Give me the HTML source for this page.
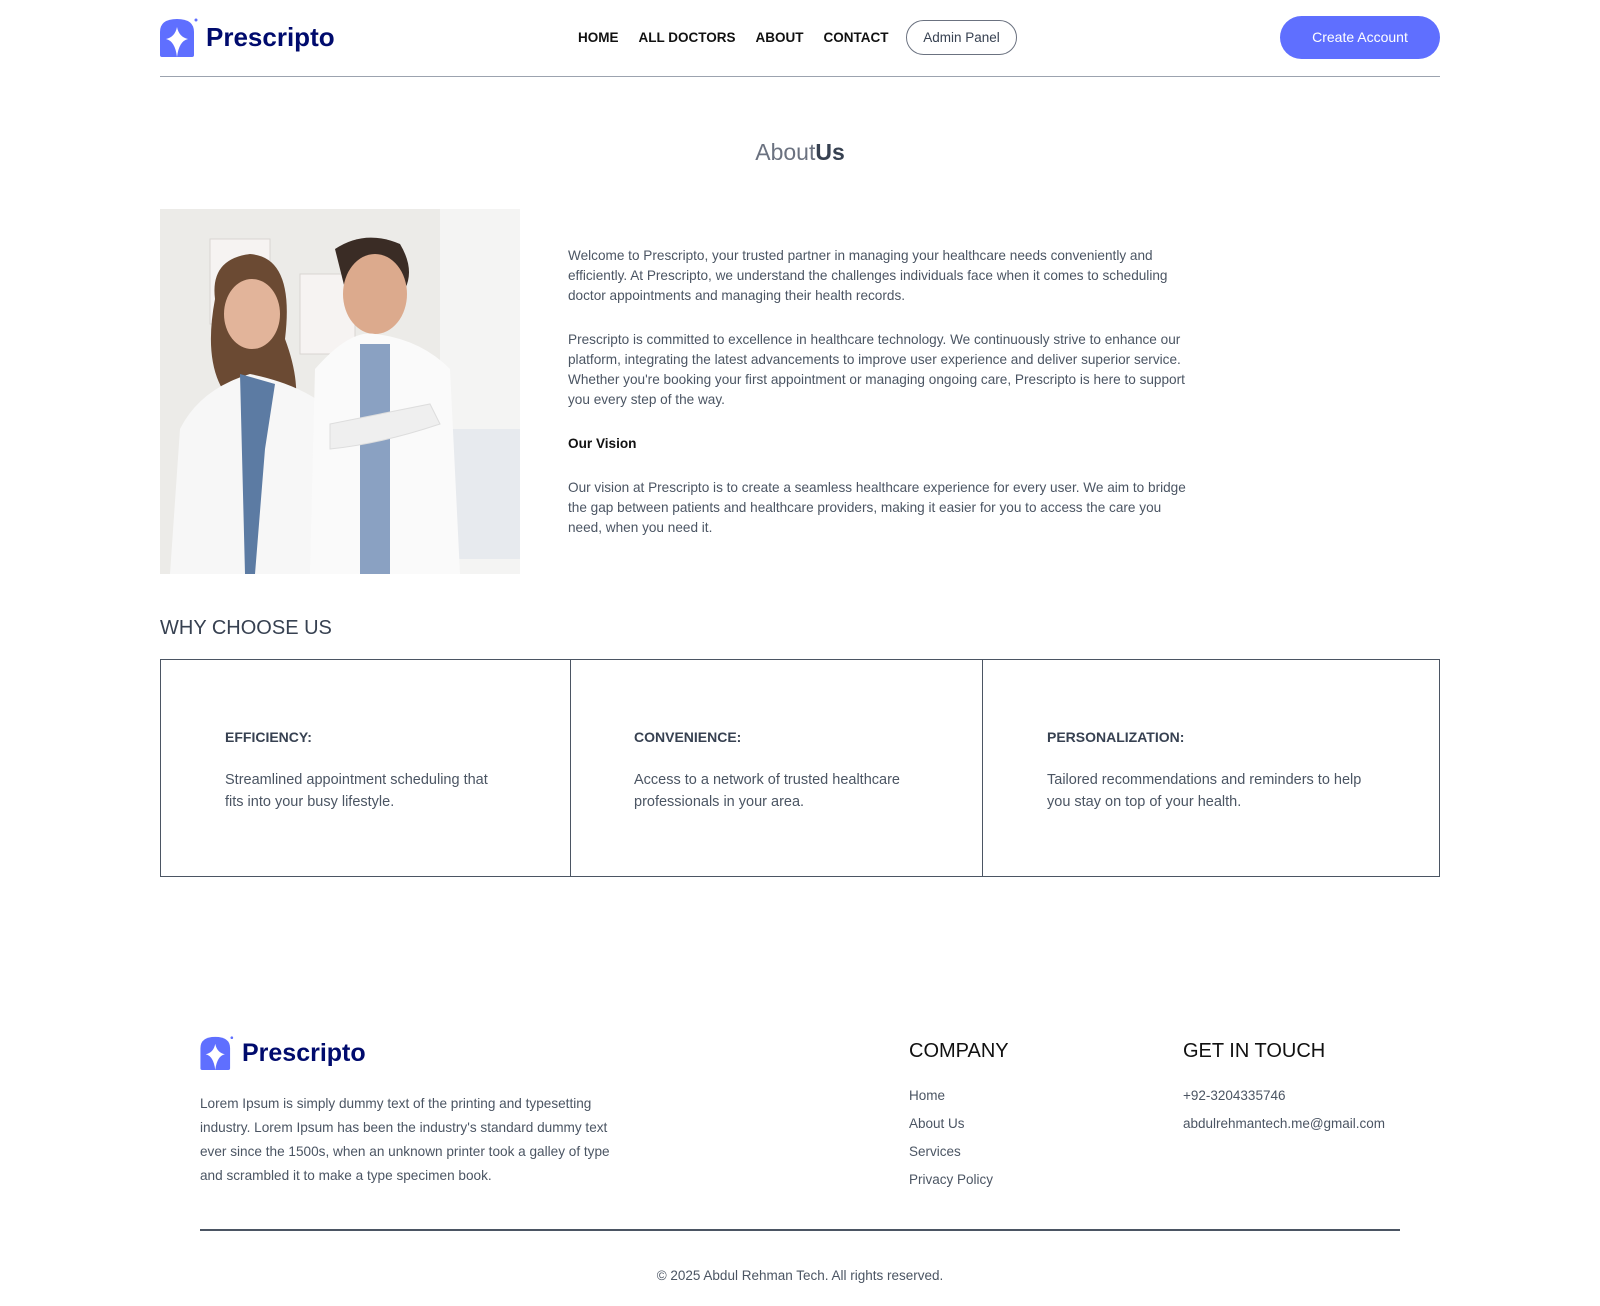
<!DOCTYPE html>
<html><head><meta charset="utf-8"><style>
*{margin:0;padding:0;box-sizing:border-box}
body{width:1600px;height:1306px;background:#fff;font-family:"Liberation Sans",sans-serif;position:relative;overflow:hidden;color:#4b5563}
.a{position:absolute;white-space:nowrap}
.logo{display:flex;align-items:center;gap:8px;color:#000b6d;font-weight:bold}
.nav a{color:#111;font-size:13.5px;font-weight:bold;margin-right:20px;text-decoration:none}
p.t{font-size:13.6px;line-height:20px;color:#4b5563}
.box{position:absolute;top:659px;height:218px;border:1.5px solid #4b5563}
.box h4{position:absolute;left:64px;top:69px;font-size:14px;color:#374151}
.box div{position:absolute;left:64px;top:109px;font-size:14.5px;line-height:22px;color:#4b5563}
.fl{font-size:13.5px;color:#4b5563}
</style></head><body>
<div class="a logo" style="left:160px;top:18px;font-size:26px">
<svg width="38" height="39" viewBox="0 0 38 39"><path d="M0 14 Q0 1 17 1 Q34 1 34 14 V37 Q34 39 32 39 H2 Q0 39 0 37Z" fill="#5f6fff"/><path d="M17 9 Q19 19 28 21 Q19 23 17 39 Q15 23 6 21 Q15 19 17 9Z" fill="#fff"/><circle cx="36" cy="2" r="1.5" fill="#5f6fff"/></svg>
<span>Prescripto</span></div>
<div class="a nav" style="left:578px;top:30px;display:flex;align-items:center">
<a>HOME</a><a>ALL DOCTORS</a><a>ABOUT</a><a>CONTACT</a></div>
<div class="a" style="left:906px;top:20px;width:111px;height:35px;border:1px solid #6b7280;border-radius:18px;font-size:13.5px;color:#374151;text-align:center;line-height:33px">Admin Panel</div>
<div class="a" style="left:1280px;top:16px;width:160px;height:43px;background:#5f6fff;border-radius:22px;color:#fff;font-size:14px;text-align:center;line-height:43px">Create Account</div>
<div class="a" style="left:160px;top:76px;width:1280px;height:1px;background:#9ca3af"></div>
<div class="a" style="left:0;width:1600px;text-align:center;top:139px;font-size:23px;color:#6b7280">About<b style="color:#374151">Us</b></div>
<svg class="a" style="left:160px;top:209px" width="360" height="365" viewBox="0 0 360 365">
<rect width="360" height="365" fill="#ecebe8"/><rect x="280" y="0" width="80" height="365" fill="#f4f4f3"/><rect x="50" y="30" width="60" height="85" fill="#f6f3f2" stroke="#d9d6d2"/><rect x="140" y="65" width="55" height="80" fill="#f6f3f2" stroke="#d9d6d2"/>
<rect x="250" y="220" width="110" height="130" fill="#e7eaee"/>
<path d="M55 90 Q50 50 90 45 Q135 48 125 130 Q140 170 135 200 L80 200 Q40 170 55 90Z" fill="#6b4a33"/>
<ellipse cx="92" cy="105" rx="28" ry="35" fill="#e2b49a"/>
<path d="M10 365 L20 220 Q40 180 90 165 Q140 175 170 200 L180 365Z" fill="#f7f7f7"/>
<path d="M80 165 L115 175 L105 240 L95 365 L85 365Z" fill="#5c7ba3"/>
<path d="M175 40 Q205 20 240 35 Q255 60 245 80 L185 80Z" fill="#3a2c25"/>
<ellipse cx="215" cy="85" rx="32" ry="40" fill="#dcaa8d"/>
<path d="M150 365 L155 160 Q190 120 215 125 Q260 130 290 160 L300 365Z" fill="#fafafa"/>
<path d="M200 135 L230 135 L230 365 L200 365Z" fill="#8aa1c2"/>
<path d="M170 215 Q220 205 270 195 L280 215 Q220 235 170 240Z" fill="#efefef" stroke="#ddd"/>
</svg>
<div class="a" style="left:568px;top:246px">
<p class="t">Welcome to Prescripto, your trusted partner in managing your healthcare needs conveniently and<br>efficiently. At Prescripto, we understand the challenges individuals face when it comes to scheduling<br>doctor appointments and managing their health records.</p>
<p class="t" style="margin-top:24px">Prescripto is committed to excellence in healthcare technology. We continuously strive to enhance our<br>platform, integrating the latest advancements to improve user experience and deliver superior service.<br>Whether you're booking your first appointment or managing ongoing care, Prescripto is here to support<br>you every step of the way.</p>
<p class="t" style="margin-top:24px;color:#111;font-weight:bold">Our Vision</p>
<p class="t" style="margin-top:24px">Our vision at Prescripto is to create a seamless healthcare experience for every user. We aim to bridge<br>the gap between patients and healthcare providers, making it easier for you to access the care you<br>need, when you need it.</p>
</div>
<div class="a" style="left:160px;top:617px;font-size:20px;color:#374151;font-weight:500">WHY CHOOSE US</div>
<div class="box" style="left:160px;width:411px"><h4>EFFICIENCY:</h4><div>Streamlined appointment scheduling that<br>fits into your busy lifestyle.</div></div>
<div class="box" style="left:570px;width:413px;border-left:none"><h4>CONVENIENCE:</h4><div>Access to a network of trusted healthcare<br>professionals in your area.</div></div>
<div class="box" style="left:982px;width:458px"><h4>PERSONALIZATION:</h4><div>Tailored recommendations and reminders to help<br>you stay on top of your health.</div></div>
<div class="a logo" style="left:200px;top:1036px;font-size:25px">
<svg width="34" height="34" viewBox="0 0 38 39"><path d="M0 14 Q0 1 17 1 Q34 1 34 14 V37 Q34 39 32 39 H2 Q0 39 0 37Z" fill="#5f6fff"/><path d="M17 9 Q19 19 28 21 Q19 23 17 39 Q15 23 6 21 Q15 19 17 9Z" fill="#fff"/><circle cx="36" cy="2" r="1.5" fill="#5f6fff"/></svg>
<span>Prescripto</span></div>
<div class="a fl" style="left:200px;top:1092px;line-height:24px;font-size:13.6px">Lorem Ipsum is simply dummy text of the printing and typesetting<br>industry. Lorem Ipsum has been the industry's standard dummy text<br>ever since the 1500s, when an unknown printer took a galley of type<br>and scrambled it to make a type specimen book.</div>
<div class="a" style="left:909px;top:1040px;font-size:20px;color:#111;font-weight:500">COMPANY</div>
<div class="a fl" style="left:909px;top:1082px;line-height:28px">Home<br>About Us<br>Services<br>Privacy Policy</div>
<div class="a" style="left:1183px;top:1040px;font-size:20px;color:#111;font-weight:500">GET IN TOUCH</div>
<div class="a fl" style="left:1183px;top:1082px;line-height:28px">+92-3204335746<br>abdulrehmantech.me@gmail.com</div>
<div class="a" style="left:200px;top:1229px;width:1200px;height:1.5px;background:#4b5563"></div>
<div class="a fl" style="left:0;width:1600px;text-align:center;top:1268px">© 2025 Abdul Rehman Tech. All rights reserved.</div>
</body></html>
